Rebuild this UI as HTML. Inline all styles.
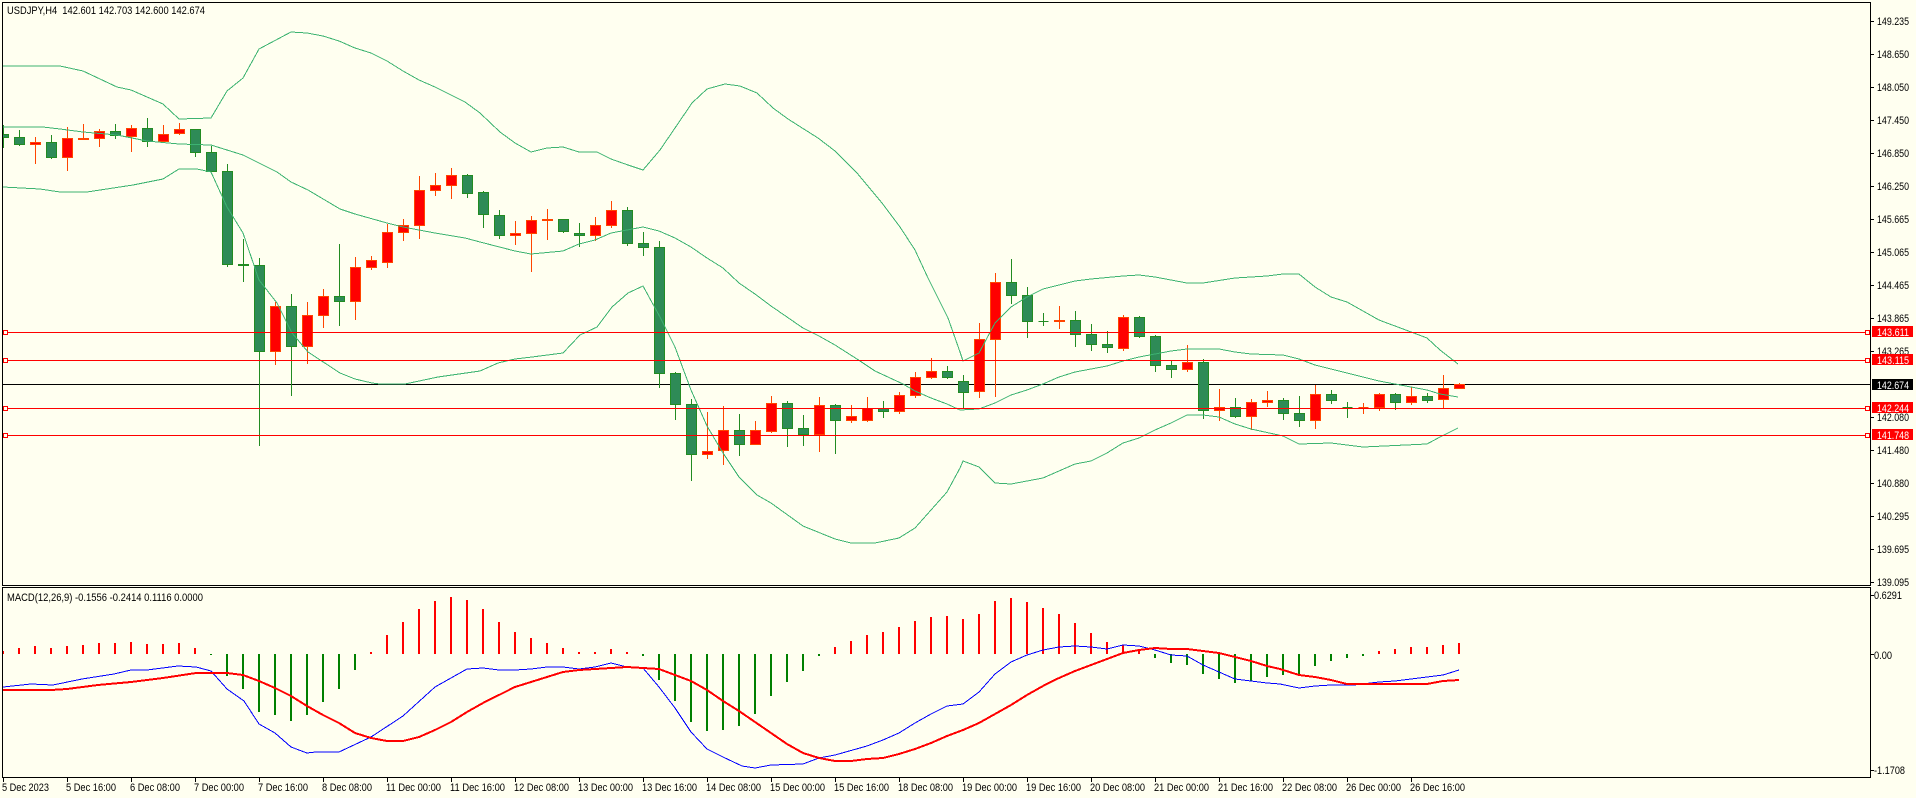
<!DOCTYPE html>
<html><head><meta charset="utf-8"><title>USDJPY,H4</title>
<style>
html,body{margin:0;padding:0;background:#FFFFF0;overflow:hidden}
svg{display:block}
text{font-family:"Liberation Sans",sans-serif;font-size:11px;fill:#000}
.w{fill:#fff}
path,polyline,rect{shape-rendering:crispEdges}
polyline{fill:none}
</style></head>
<body>
<svg xmlns="http://www.w3.org/2000/svg" width="1916" height="798" viewBox="0 0 1916 798">
<defs>
<clipPath id="c1"><rect x="3" y="3" width="1867" height="582"/></clipPath>
<clipPath id="c2"><rect x="3" y="588" width="1867" height="189"/></clipPath>
</defs>
<rect width="1916" height="798" fill="#FFFFF0"/>
<g clip-path="url(#c1)">
<path d="M3 384.5H1870" stroke="#000" fill="none"/>
<path fill="none" stroke="#228B22" d="M3.5 125V148M19.5 130V146M51.5 135V159M115.5 124V139M147.5 118V147M195.5 129V157M211.5 146V172M227.5 164V267M243.5 239V282M259.5 258V446M291.5 294V396M339.5 244V326M467.5 174V198M483.5 191V228M499.5 210V239M563.5 219V233M579.5 223V247M627.5 207V246M643.5 232V256M659.5 241V388M675.5 372V420M691.5 399V481M739.5 414V456M787.5 401V447M803.5 415V446M835.5 404V454M883.5 401V418M947.5 366V379M963.5 375V408M1011.5 259V304M1027.5 287V338M1043.5 313V326M1075.5 311V347M1091.5 324V351M1107.5 331V353M1139.5 316V338M1155.5 335V372M1171.5 361V378M1203.5 359V419M1235.5 398V418M1283.5 398V420M1299.5 396V427M1331.5 390V404M1347.5 402V418M1395.5 393V410M1427.5 393V403"/>
<path fill="#2E8B57" stroke="#228B22" d="M-1.5 134.5h10V137.5h-10zM14.5 137.5h10V144.5h-10zM46.5 142.5h10V157.5h-10zM110.5 131.5h10V135.5h-10zM142.5 128.5h10V141.5h-10zM190.5 129.5h10V152.5h-10zM206.5 152.5h10V171.5h-10zM222.5 171.5h10V264.5h-10zM238.5 264.5h10V265.5h-10zM254.5 265.5h10V351.5h-10zM286.5 306.5h10V346.5h-10zM334.5 296.5h10V301.5h-10zM462.5 175.5h10V193.5h-10zM478.5 192.5h10V214.5h-10zM494.5 215.5h10V235.5h-10zM558.5 219.5h10V231.5h-10zM574.5 233.5h10V235.5h-10zM622.5 210.5h10V243.5h-10zM638.5 243.5h10V247.5h-10zM654.5 247.5h10V373.5h-10zM670.5 373.5h10V404.5h-10zM686.5 404.5h10V454.5h-10zM734.5 430.5h10V444.5h-10zM782.5 403.5h10V428.5h-10zM798.5 428.5h10V434.5h-10zM830.5 405.5h10V420.5h-10zM878.5 408.5h10V411.5h-10zM942.5 371.5h10V377.5h-10zM958.5 381.5h10V392.5h-10zM1006.5 282.5h10V295.5h-10zM1022.5 295.5h10V321.5h-10zM1038.5 321.5h10V321.5h-10zM1070.5 320.5h10V334.5h-10zM1086.5 334.5h10V344.5h-10zM1102.5 344.5h10V347.5h-10zM1134.5 317.5h10V336.5h-10zM1150.5 336.5h10V365.5h-10zM1166.5 365.5h10V369.5h-10zM1198.5 362.5h10V410.5h-10zM1230.5 407.5h10V416.5h-10zM1278.5 400.5h10V413.5h-10zM1294.5 413.5h10V420.5h-10zM1326.5 394.5h10V400.5h-10zM1342.5 407.5h10V407.5h-10zM1390.5 394.5h10V402.5h-10zM1422.5 396.5h10V400.5h-10z"/>
<path fill="none" stroke="#FF4500" d="M35.5 137V164M67.5 127V171M83.5 124V140M99.5 129V147M131.5 125V152M163.5 125V143M179.5 123V135M275.5 302V365M307.5 302V364M323.5 289V328M355.5 257V320M371.5 256V270M387.5 224V268M403.5 219V241M419.5 176V239M435.5 173V196M451.5 168V199M515.5 221V245M531.5 216V272M547.5 209V240M595.5 217V241M611.5 201V228M707.5 412V459M723.5 406V465M755.5 421V445M771.5 396V433M819.5 397V452M851.5 405V423M867.5 397V422M899.5 392V414M915.5 372V398M931.5 358V379M979.5 323V398M995.5 273V397M1059.5 306V329M1123.5 315V351M1187.5 345V372M1219.5 389V421M1251.5 399V430M1267.5 391V407M1315.5 385V429M1363.5 403V414M1379.5 393V411M1411.5 387V405M1443.5 375V408M1459.5 383V389"/>
<path fill="#FF0000" stroke="#FF4500" d="M30.5 142.5h10V144.5h-10zM62.5 138.5h10V157.5h-10zM78.5 138.5h10V139.5h-10zM94.5 131.5h10V138.5h-10zM126.5 128.5h10V136.5h-10zM158.5 134.5h10V141.5h-10zM174.5 129.5h10V133.5h-10zM270.5 306.5h10V351.5h-10zM302.5 315.5h10V346.5h-10zM318.5 296.5h10V315.5h-10zM350.5 267.5h10V301.5h-10zM366.5 260.5h10V267.5h-10zM382.5 232.5h10V262.5h-10zM398.5 225.5h10V232.5h-10zM414.5 190.5h10V225.5h-10zM430.5 185.5h10V190.5h-10zM446.5 175.5h10V185.5h-10zM510.5 233.5h10V235.5h-10zM526.5 220.5h10V233.5h-10zM542.5 219.5h10V220.5h-10zM590.5 225.5h10V235.5h-10zM606.5 210.5h10V225.5h-10zM702.5 451.5h10V454.5h-10zM718.5 430.5h10V450.5h-10zM750.5 430.5h10V444.5h-10zM766.5 403.5h10V431.5h-10zM814.5 405.5h10V434.5h-10zM846.5 416.5h10V420.5h-10zM862.5 408.5h10V420.5h-10zM894.5 395.5h10V411.5h-10zM910.5 377.5h10V395.5h-10zM926.5 371.5h10V377.5h-10zM974.5 339.5h10V391.5h-10zM990.5 282.5h10V339.5h-10zM1054.5 320.5h10V321.5h-10zM1118.5 317.5h10V348.5h-10zM1182.5 362.5h10V369.5h-10zM1214.5 407.5h10V410.5h-10zM1246.5 402.5h10V416.5h-10zM1262.5 400.5h10V402.5h-10zM1310.5 394.5h10V420.5h-10zM1358.5 407.5h10V407.5h-10zM1374.5 394.5h10V407.5h-10zM1406.5 396.5h10V402.5h-10zM1438.5 388.5h10V399.5h-10zM1454.5 384.5h10V388.5h-10z"/>
<g stroke="#3CB371" stroke-width="1">
<polyline points="3,66 60,66 83,71 117,87 131,90 163,104 179,119 211,118 227,91 243,78 259,49 291,32 307,33 323,36 339,41 355,48 371,53 387,61 403,71 419,80 435,87 465,102 480,113 500,132 515,143 531,152 547,148 563,147 579,152 597,152 611,159 628,165 643,170 660,150 675,128 692,103 707,89 725,84 740,86 757,93 773,108 788,119 818,138 835,151 857,173 882,203 900,227 915,250 928,278 948,318 960,352 963,361 979,353 995,323 1011,307 1027,297 1043,289 1059,285 1075,281 1091,279 1123,276 1139,275 1155,277 1187,283 1203,283 1235,278 1267,276 1283,274 1299,274 1315,287 1331,297 1347,302 1379,320 1395,326 1411,332 1427,338 1440,350 1458,364"/>
<polyline points="3,127 43,127 60,129 83,132 117,135 147,141 179,144 211,145 227,150 243,155 259,163 277,172 291,182 308,190 340,209 355,214 387,223 403,227 435,233 465,238 480,242 515,251 531,254 563,251 579,244 595,240 611,233 627,230 643,227 659,231 675,238 691,247 707,258 723,268 739,283 755,294 771,306 787,317 803,328 819,336 835,345 857,359 875,371 903,384 915,391 931,398 947,404 960,410 979,409 995,403 1011,395 1027,390 1043,384 1059,377 1075,372 1091,369 1107,366 1123,361 1139,357 1155,354 1171,351 1187,349 1219,349 1235,352 1251,354 1283,355 1299,359 1315,365 1331,369 1347,373 1363,377 1379,381 1395,384 1411,387 1427,390 1440,394 1458,397"/>
<polyline points="3,187 40,189 60,192 87,192 133,185 163,179 179,169 197,169 211,172 227,207 243,233 259,280 277,303 292,333 308,352 340,373 355,379 372,383 380,384 405,384 438,377 480,371 498,363 515,359 532,357 563,353 580,335 597,327 612,307 628,293 643,286 660,317 675,347 691,390 707,426 723,453 739,477 757,495 771,503 803,526 835,539 851,543 875,543 899,538 915,528 931,510 947,492 960,468 963,461 979,467 995,483 1011,484 1043,478 1059,471 1075,464 1091,461 1107,453 1123,443 1139,438 1155,430 1171,423 1187,415 1203,415 1219,417 1235,424 1251,429 1283,436 1299,444 1331,443 1363,447 1427,444 1440,437 1458,428"/>
</g>
<path d="M3 332.5H1870M3 360.5H1870M3 408.5H1870M3 435.5H1870" stroke="#FF0000" fill="none"/>
<path d="M3.5 330.5h4v4h-4zM3.5 358.5h4v4h-4zM3.5 406.5h4v4h-4zM3.5 433.5h4v4h-4zM1865.5 330.5h4v4h-4zM1865.5 358.5h4v4h-4zM1865.5 406.5h4v4h-4zM1865.5 433.5h4v4h-4z" fill="#FFFFF0" stroke="#FF0000"/>
</g>
<g clip-path="url(#c2)">
<path fill="none" stroke="#FF0000" stroke-width="2" d="M3 654V651M19 654V648M35 654V646M51 654V648M67 654V646M83 654V645M99 654V643M115 654V643M131 654V642M147 654V644M163 654V644M179 654V643M195 654V648M371 654V652M387 654V635M403 654V622M419 654V609M435 654V601M451 654V597M467 654V600M483 654V609M499 654V622M515 654V632M531 654V638M547 654V643M563 654V648M579 654V652M595 654V652M611 654V649M627 654V652M835 654V647M851 654V641M867 654V635M883 654V632M899 654V627M915 654V621M931 654V617M947 654V616M963 654V619M979 654V614M995 654V601M1011 654V598M1027 654V602M1043 654V608M1059 654V614M1075 654V623M1091 654V633M1107 654V642M1123 654V645M1139 654V651M1379 654V651M1395 654V649M1411 654V647M1427 654V647M1443 654V645M1459 654V643"/>
<path fill="none" stroke="#008000" stroke-width="2" d="M211 654V655M227 654V676M243 654V689M259 654V712M275 654V715M291 654V721M307 654V715M323 654V702M339 654V689M355 654V670M643 654V656M659 654V680M675 654V701M691 654V722M707 654V731M723 654V730M739 654V726M755 654V714M771 654V696M787 654V682M803 654V671M819 654V656M1155 654V658M1171 654V663M1187 654V665M1203 654V674M1219 654V679M1235 654V683M1251 654V681M1267 654V677M1283 654V675M1299 654V674M1315 654V666M1331 654V661M1347 654V658M1363 654V656"/>
<polyline stroke="#0000FF" stroke-width="1" points="3,687 31,684 53,685 82,679 114,674 131,670 147,670 178,666 196,667 211,671 227,689 244,701 259,724 275,733 291,747 307,753 316,752 339,752 371,737 403,716 435,687 451,678 467,669 483,668 499,670 515,670 531,669 547,667 563,667 579,669 595,667 611,663 627,667 643,668 659,687 675,708 691,732 707,749 723,757 742,766 755,768 771,765 803,764 819,758 835,755 867,746 883,740 899,733 915,723 931,714 947,706 963,704 979,692 995,674 1011,662 1027,655 1043,650 1059,647 1075,646 1091,647 1107,649 1123,645 1139,646 1155,650 1171,655 1187,656 1203,665 1219,672 1235,679 1251,681 1267,683 1280,684 1299,688 1315,686 1331,685 1354,685 1379,682 1395,681 1411,679 1427,677 1443,675 1459,670"/>
<polyline stroke="#FF0000" stroke-width="2" points="3,690 51,690 67,689 98,685 131,682 163,678 196,673 227,673 243,675 259,681 275,688 291,696 307,706 323,715 339,723 355,733 371,738 387,741 403,741 419,737 435,730 451,722 467,712 483,703 499,695 515,687 531,682 547,677 563,672 579,670 595,669 611,668 627,667 643,668 659,669 675,675 691,681 707,690 723,701 739,711 755,722 771,733 787,744 803,753 819,758 835,761 851,761 867,759 883,758 899,754 915,749 931,743 947,736 963,730 979,723 995,714 1011,705 1027,695 1043,686 1059,678 1075,671 1091,665 1107,659 1123,653 1139,650 1155,648 1171,649 1187,649 1203,651 1219,653 1235,657 1251,661 1267,666 1280,669 1299,675 1315,677 1331,680 1347,684 1379,684 1395,684 1427,684 1443,681 1459,680"/>
</g>
<path fill="none" stroke="#000" d="M2 2.5H1870.5M2.5 2V586M2 585.5H1871M1870.5 2V586M2 587.5H1871M2.5 587V778M2 777.5H1871M1870.5 587V778"/>
<path fill="none" stroke="#000" d="M1871 21.5h3M1871 54.5h3M1871 87.5h3M1871 120.5h3M1871 153.5h3M1871 186.5h3M1871 219.5h3M1871 252.5h3M1871 285.5h3M1871 318.5h3M1871 351.5h3M1871 417.5h3M1871 450.5h3M1871 483.5h3M1871 516.5h3M1871 549.5h3M1871 582.5h3M1871 595.5h3M1871 654.5h3M1871 770.5h3M3.5 778v4M67.5 778v4M131.5 778v4M195.5 778v4M259.5 778v4M323.5 778v4M387.5 778v4M451.5 778v4M515.5 778v4M579.5 778v4M643.5 778v4M707.5 778v4M771.5 778v4M835.5 778v4M899.5 778v4M963.5 778v4M1027.5 778v4M1091.5 778v4M1155.5 778v4M1219.5 778v4M1283.5 778v4M1347.5 778v4M1411.5 778v4"/>
<text x="7" y="14" textLength="198" lengthAdjust="spacingAndGlyphs">USDJPY,H4&#160; 142.601 142.703 142.600 142.674</text>
<text x="7" y="601" textLength="196" lengthAdjust="spacingAndGlyphs">MACD(12,26,9) -0.1556 -0.2414 0.1116 0.0000</text>
<g>
<text x="1877" y="25" textLength="32" lengthAdjust="spacingAndGlyphs">149.235</text>
<text x="1877" y="58" textLength="32" lengthAdjust="spacingAndGlyphs">148.650</text>
<text x="1877" y="91" textLength="32" lengthAdjust="spacingAndGlyphs">148.050</text>
<text x="1877" y="124" textLength="32" lengthAdjust="spacingAndGlyphs">147.450</text>
<text x="1877" y="157" textLength="32" lengthAdjust="spacingAndGlyphs">146.850</text>
<text x="1877" y="190" textLength="32" lengthAdjust="spacingAndGlyphs">146.250</text>
<text x="1877" y="223" textLength="32" lengthAdjust="spacingAndGlyphs">145.665</text>
<text x="1877" y="256" textLength="32" lengthAdjust="spacingAndGlyphs">145.065</text>
<text x="1877" y="289" textLength="32" lengthAdjust="spacingAndGlyphs">144.465</text>
<text x="1877" y="322" textLength="32" lengthAdjust="spacingAndGlyphs">143.865</text>
<text x="1877" y="355" textLength="32" lengthAdjust="spacingAndGlyphs">143.265</text>
<text x="1877" y="421" textLength="32" lengthAdjust="spacingAndGlyphs">142.080</text>
<text x="1877" y="454" textLength="32" lengthAdjust="spacingAndGlyphs">141.480</text>
<text x="1877" y="487" textLength="32" lengthAdjust="spacingAndGlyphs">140.880</text>
<text x="1877" y="520" textLength="32" lengthAdjust="spacingAndGlyphs">140.295</text>
<text x="1877" y="553" textLength="32" lengthAdjust="spacingAndGlyphs">139.695</text>
<text x="1877" y="586" textLength="32" lengthAdjust="spacingAndGlyphs">139.095</text>
</g>
<rect x="1872" y="326" width="41" height="11" fill="#FF0000"/>
<rect x="1872" y="354" width="41" height="11" fill="#FF0000"/>
<rect x="1872" y="379" width="41" height="11" fill="#000"/>
<rect x="1872" y="402" width="41" height="11" fill="#FF0000"/>
<rect x="1872" y="429" width="41" height="11" fill="#FF0000"/>
<text class="w" x="1877" y="336" textLength="32" lengthAdjust="spacingAndGlyphs">143.611</text>
<text class="w" x="1877" y="364" textLength="32" lengthAdjust="spacingAndGlyphs">143.115</text>
<text class="w" x="1877" y="389" textLength="32" lengthAdjust="spacingAndGlyphs">142.674</text>
<text class="w" x="1877" y="412" textLength="32" lengthAdjust="spacingAndGlyphs">142.244</text>
<text class="w" x="1877" y="439" textLength="32" lengthAdjust="spacingAndGlyphs">141.748</text>
<text x="1874" y="599" textLength="28" lengthAdjust="spacingAndGlyphs">0.6291</text>
<text x="1874" y="659" textLength="18" lengthAdjust="spacingAndGlyphs">0.00</text>
<text x="1874" y="774" textLength="31" lengthAdjust="spacingAndGlyphs">-1.1708</text>
<text x="2" y="791" textLength="47" lengthAdjust="spacingAndGlyphs">5 Dec 2023</text>
<text x="66" y="791" textLength="50" lengthAdjust="spacingAndGlyphs">5 Dec 16:00</text>
<text x="130" y="791" textLength="50" lengthAdjust="spacingAndGlyphs">6 Dec 08:00</text>
<text x="194" y="791" textLength="50" lengthAdjust="spacingAndGlyphs">7 Dec 00:00</text>
<text x="258" y="791" textLength="50" lengthAdjust="spacingAndGlyphs">7 Dec 16:00</text>
<text x="322" y="791" textLength="50" lengthAdjust="spacingAndGlyphs">8 Dec 08:00</text>
<text x="386" y="791" textLength="55" lengthAdjust="spacingAndGlyphs">11 Dec 00:00</text>
<text x="450" y="791" textLength="55" lengthAdjust="spacingAndGlyphs">11 Dec 16:00</text>
<text x="514" y="791" textLength="55" lengthAdjust="spacingAndGlyphs">12 Dec 08:00</text>
<text x="578" y="791" textLength="55" lengthAdjust="spacingAndGlyphs">13 Dec 00:00</text>
<text x="642" y="791" textLength="55" lengthAdjust="spacingAndGlyphs">13 Dec 16:00</text>
<text x="706" y="791" textLength="55" lengthAdjust="spacingAndGlyphs">14 Dec 08:00</text>
<text x="770" y="791" textLength="55" lengthAdjust="spacingAndGlyphs">15 Dec 00:00</text>
<text x="834" y="791" textLength="55" lengthAdjust="spacingAndGlyphs">15 Dec 16:00</text>
<text x="898" y="791" textLength="55" lengthAdjust="spacingAndGlyphs">18 Dec 08:00</text>
<text x="962" y="791" textLength="55" lengthAdjust="spacingAndGlyphs">19 Dec 00:00</text>
<text x="1026" y="791" textLength="55" lengthAdjust="spacingAndGlyphs">19 Dec 16:00</text>
<text x="1090" y="791" textLength="55" lengthAdjust="spacingAndGlyphs">20 Dec 08:00</text>
<text x="1154" y="791" textLength="55" lengthAdjust="spacingAndGlyphs">21 Dec 00:00</text>
<text x="1218" y="791" textLength="55" lengthAdjust="spacingAndGlyphs">21 Dec 16:00</text>
<text x="1282" y="791" textLength="55" lengthAdjust="spacingAndGlyphs">22 Dec 08:00</text>
<text x="1346" y="791" textLength="55" lengthAdjust="spacingAndGlyphs">26 Dec 00:00</text>
<text x="1410" y="791" textLength="55" lengthAdjust="spacingAndGlyphs">26 Dec 16:00</text>
</svg>
</body></html>
